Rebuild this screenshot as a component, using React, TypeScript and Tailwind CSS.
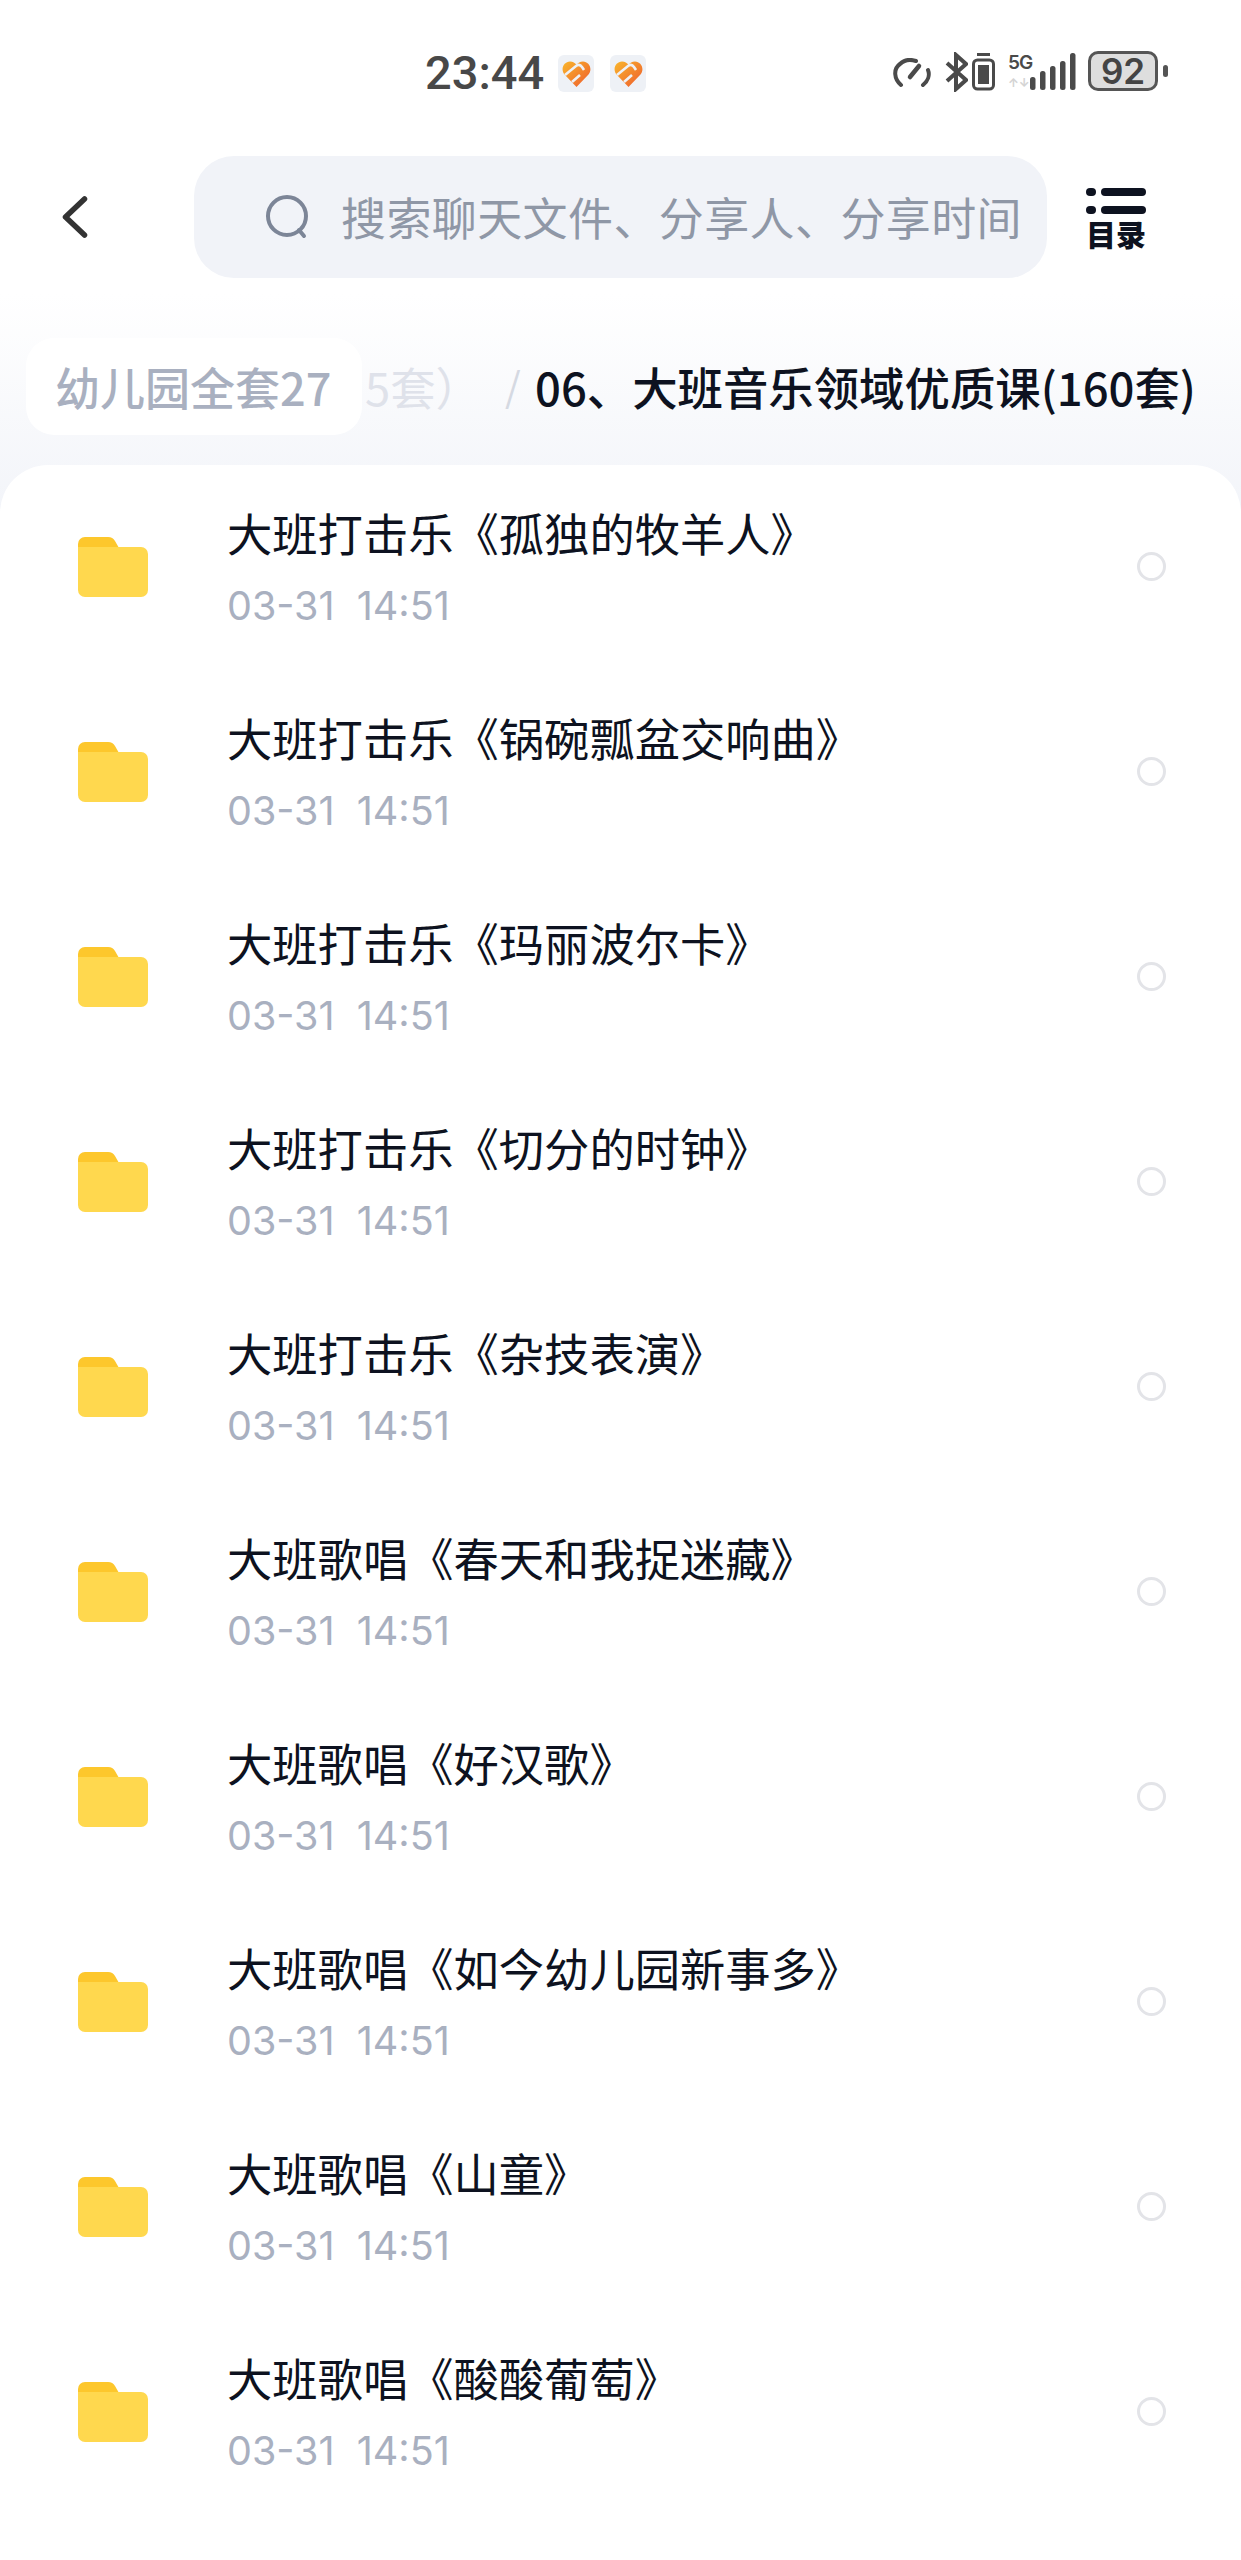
const names = [
  "大班打击乐《孤独的牧羊人》",
  "大班打击乐《锅碗瓢盆交响曲》",
  "大班打击乐《玛丽波尔卡》",
  "大班打击乐《切分的时钟》",
  "大班打击乐《杂技表演》",
  "大班歌唱《春天和我捉迷藏》",
  "大班歌唱《好汉歌》",
  "大班歌唱《如今幼儿园新事多》",
  "大班歌唱《山童》",
  "大班歌唱《酸酸葡萄》",
];

const font = { fontFamily: '"Noto Sans CJK SC", Inter, sans-serif' };

function Heart() {
  return (
    <div className="w-[36px] h-[37px] bg-[#eef1f6] rounded-[6px] flex items-center justify-center">
      <svg width="29" height="26" viewBox="0 0 29 26">
        <defs>
          <linearGradient id="hg" x1="0" y1="0" x2="1" y2="1">
            <stop offset="0" stopColor="#f9b62c" />
            <stop offset="1" stopColor="#ee5b2e" />
          </linearGradient>
        </defs>
        <path d="M14.5 26 L2.5 13.5 C-2 8 2 0.5 8 0.5 C11 0.5 13 2 14.5 4 C16 2 18 0.5 21 0.5 C27 0.5 31 8 26.5 13.5 Z" fill="url(#hg)" />
        <path d="M3 14 L14 5 C17 3 19 4.5 20 6 L22 9 M10 21 L18 14" stroke="#eef1f6" strokeWidth="2.6" fill="none" />
      </svg>
    </div>
  );
}

function Folder() {
  return (
    <svg width="70" height="60" viewBox="0 0 70 60">
      <path d="M0 7 a7 7 0 0 1 7-7 h23 a8 8 0 0 1 7 4 l4 7 H0 Z" fill="#fdc72c" />
      <path d="M0 10 h63 a7 7 0 0 1 7 7 v36 a7 7 0 0 1-7 7 H7 a7 7 0 0 1-7-7 Z" fill="#ffd84e" />
    </svg>
  );
}

export default function App() {
  return (
    <div className="w-[1241px] h-[2560px] overflow-hidden bg-white relative" style={font}>
      <div className="h-[139px] flex items-start pl-[425px] pt-[52px]">
        <span className="w-[120px] text-[47px] leading-[42px] font-medium text-[#484848] font-['Roboto'] whitespace-nowrap">23:44</span>
        <div className="ml-[13px] mt-[3px]"><Heart /></div>
        <div className="ml-[16px] mt-[3px]"><Heart /></div>

        <svg className="ml-[247px] mt-[6px]" width="38" height="30" viewBox="0 0 38 30" fill="none" stroke="#4a4a4a" strokeWidth="4" strokeLinecap="round">
          <path d="M8 27 C1 21 0 11 7 6 C11 2 17 1 23 3" />
          <path d="M30 27 C35 23 37 17 35 12" />
          <path d="M17 19 L26 8" strokeWidth="4.5" />
        </svg>
        <svg className="ml-[14px]" width="23" height="40" viewBox="0 0 23 40" fill="none" stroke="#4a4a4a" strokeWidth="4">
          <path d="M2 11 L21 28 L11 37 V3 L21 12 L2 29" />
        </svg>
        <svg className="ml-[4px]" width="23" height="39" viewBox="0 0 23 39" fill="none">
          <rect x="1.5" y="8" width="20" height="29" rx="4" stroke="#4a4a4a" strokeWidth="3" />
          <rect x="5" y="1" width="13" height="3" fill="#4a4a4a" />
          <rect x="6" y="13" width="11" height="19" fill="#4a4a4a" />
        </svg>
        <div className="ml-[13px] w-[26px] h-[39px] flex flex-col items-start text-[#4a4a4a] font-['Inter']">
          <span className="text-[19px] leading-[21px] font-semibold tracking-[-1px]">5G</span>
          <span className="text-[12px] leading-[15px] font-bold text-[#d4d4d4] mt-[2px]">↑↓</span>
        </div>
        <svg className="ml-[-4px]" width="46" height="39" viewBox="0 0 46 39" fill="#4a4a4a">
          <rect x="0" y="25" width="5.5" height="13" rx="2.5" />
          <rect x="10" y="19" width="5.5" height="19" rx="2.5" />
          <rect x="20" y="14" width="5.5" height="24" rx="2.5" />
          <rect x="30" y="9" width="5.5" height="29" rx="2.5" />
          <rect x="40" y="1" width="5.5" height="37" rx="2.5" />
        </svg>
        <div className="ml-[12px] mt-[-1px] w-[70px] h-[40px] rounded-[10px] border-[3px] border-[#555] bg-[#dedede] flex items-center justify-center text-[35px] leading-[34px] font-semibold text-[#444] font-['Inter']">
          92
        </div>
        <div className="ml-[5px] mt-[13px] w-[5px] h-[12px] rounded-full bg-[#555]" />
      </div>

      <div className="h-[155px] flex items-center">
        <svg className="ml-[60px]" width="30" height="46" viewBox="0 0 30 46" fill="none" stroke="#333" strokeWidth="5.5" strokeLinecap="round" strokeLinejoin="round">
          <path d="M24.5 5 L5.5 23 L24.5 41" />
        </svg>
        <div className="ml-[104px] w-[853px] h-[122px] rounded-[40px] bg-[#f1f3f8] flex items-center pl-[70px]">
          <svg width="48" height="48" viewBox="0 0 48 48" fill="none" stroke="#7c8597" strokeWidth="4" strokeLinecap="round">
            <circle cx="23" cy="23" r="19" />
            <path d="M35 37 L40 43" />
          </svg>
          <span className="ml-[29px] text-[45px] tracking-[0.4px] text-[#8f97a6] whitespace-nowrap">搜索聊天文件、分享人、分享时间</span>
        </div>
        <div className="ml-[38px] w-[62px] flex flex-col items-center mt-[4px]">
          <div className="flex flex-col gap-[10px] w-[60px]">
            <div className="flex gap-[5px]"><span className="w-[10px] h-[8px] rounded-full bg-[#0d1220]" /><span className="flex-1 h-[8px] rounded-full bg-[#0d1220]" /></div>
            <div className="flex gap-[5px]"><span className="w-[10px] h-[8px] rounded-full bg-[#0d1220]" /><span className="flex-1 h-[8px] rounded-full bg-[#0d1220]" /></div>
          </div>
          <span className="text-[30px] leading-[32px] mt-[3px] font-black text-[#0d1220] whitespace-nowrap">目录</span>
        </div>
      </div>

      <div className="h-[226px] bg-gradient-to-b from-[#ffffff] to-[#f2f4f9] relative flex items-start justify-end pr-[45px] pt-[64px]">
        <div className="absolute left-[365px] top-[64px] text-[45.4px] leading-[56px] text-[#dfe2ea] whitespace-nowrap">5套）</div>
        <div className="absolute left-[505px] top-[66px] text-[40px] leading-[50px] text-[#d5d9e2]">/</div>
        <div className="text-[45.4px] leading-[56px] font-medium text-[#0d1220] whitespace-nowrap">06、大班音乐领域优质课(160套)</div>
        <div className="absolute left-[26px] top-[44px] w-[336px] h-[97px] rounded-[28px] bg-white flex items-center pl-[29px] text-[45px] font-medium text-[#a9b0c0] whitespace-nowrap">幼儿园全套27</div>
      </div>

      <div className="absolute left-0 right-0 top-[465px] bottom-0 rounded-t-[48px] bg-white">
        {names.map((name) => (
          <div key={name} className="h-[205px] flex items-start relative">
            <div className="ml-[78px] mt-[72px]"><Folder /></div>
            <div className="ml-[79px] mt-[29px]">
              <div className="text-[45.3px] leading-[76px] text-[#0d1220] whitespace-nowrap">{name}</div>
              <div className="text-[39.5px] leading-[50px] mt-[11px] text-[#a9b0c0] font-['Inter'] whitespace-pre">03-31  14:51</div>
            </div>
            <div className="absolute left-[1137px] top-[87px] w-[29px] h-[29px] rounded-full border-[3px] border-[#e3e4e8]" />
          </div>
        ))}
      </div>
    </div>
  );
}
